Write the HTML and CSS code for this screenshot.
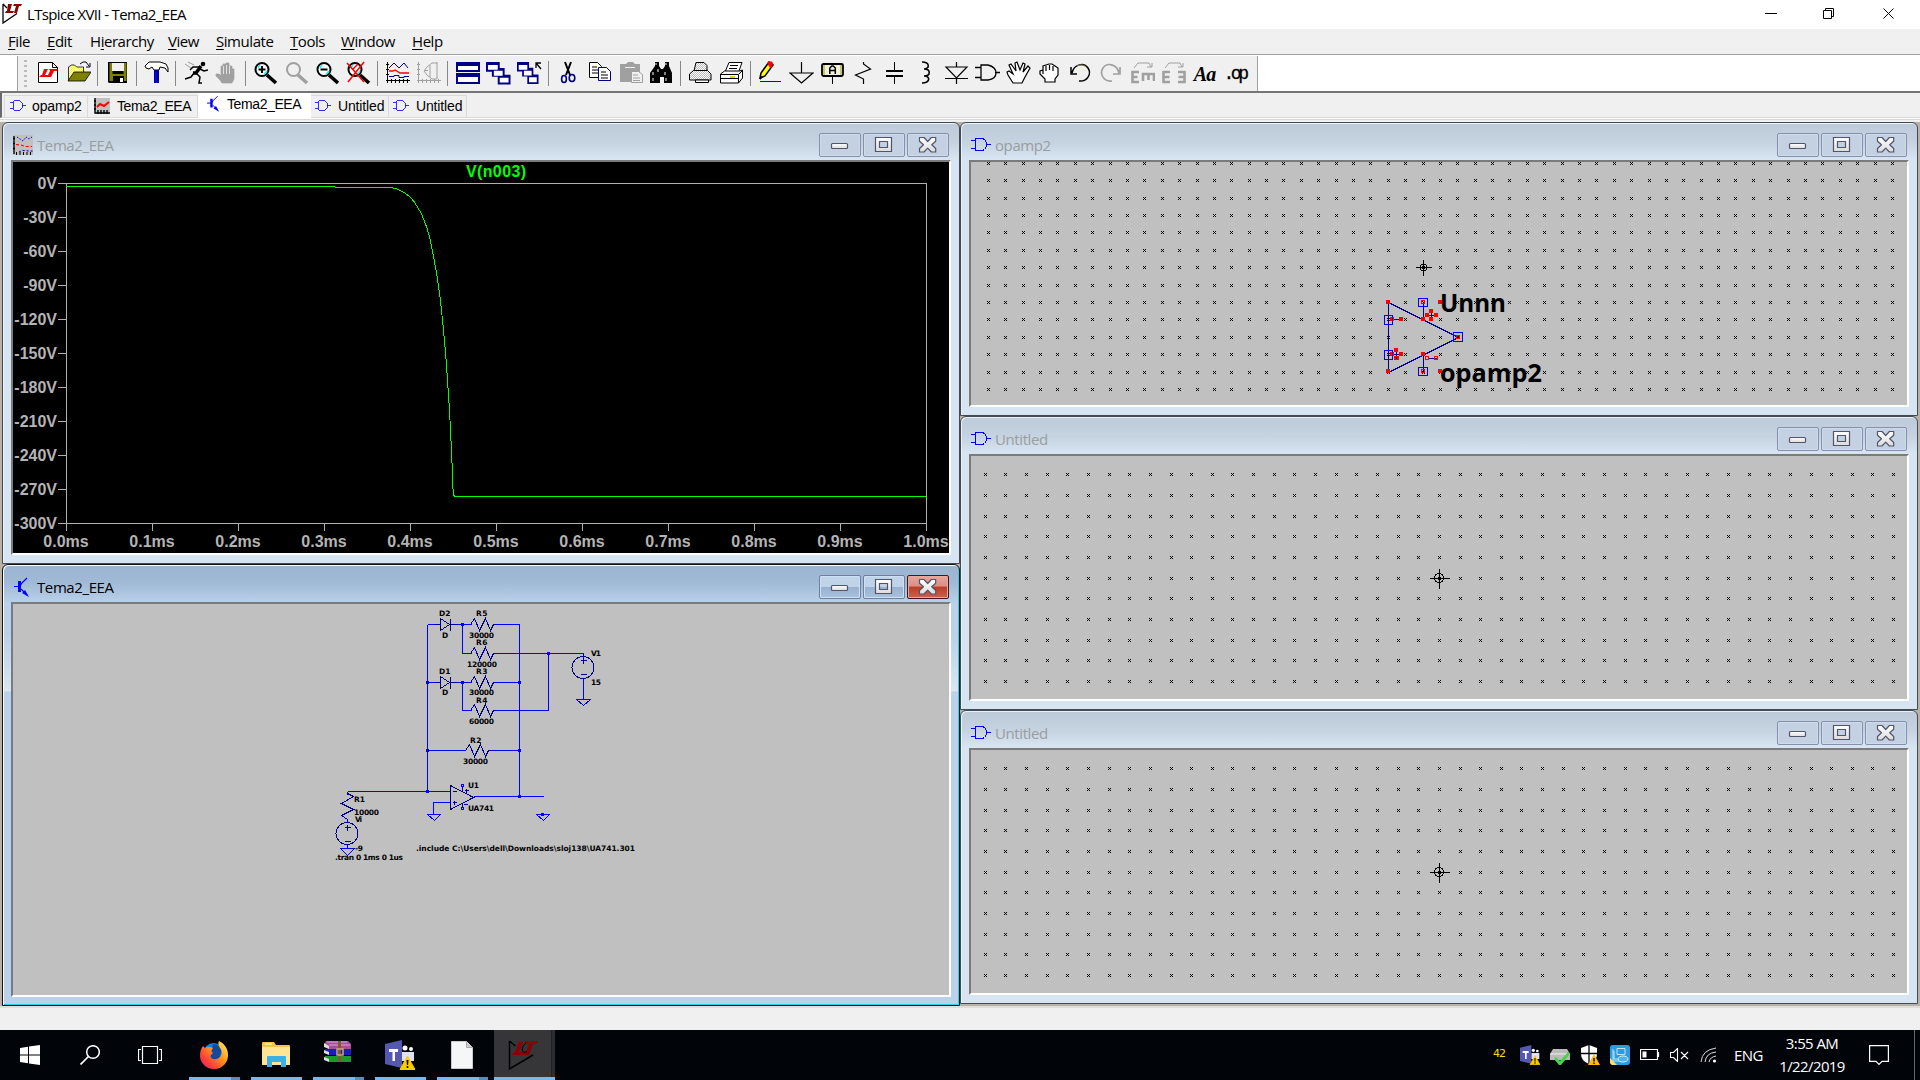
FILE: index.html
```html
<!DOCTYPE html>
<html lang="en">
<head>
<meta charset="utf-8">
<title>LTspice XVII - Tema2_EEA</title>
<link rel="stylesheet" href="styles.css">
</head>
<body>
<svg class="defs" width="0" height="0">
  <defs>
    <linearGradient id="metal" x1="0" y1="0" x2="0" y2="1"><stop offset="0" stop-color="#fff"/><stop offset="1" stop-color="#dcdcdc"/></linearGradient>
    <pattern id="dither" width="2" height="2" patternUnits="userSpaceOnUse"><rect width="2" height="2" fill="#fff"/><path d="M0 0h1v1H0zM1 1h1v1H1z" fill="#bbb"/></pattern>
    <pattern id="ydither" width="2" height="2" patternUnits="userSpaceOnUse"><rect width="2" height="2" fill="#ff0"/><path d="M0 0h1v1H0zM1 1h1v1H1z" fill="#fff"/></pattern>
    <symbol id="min" viewBox="0 0 40 22"><rect x="11.500" y="9.500" width="16" height="5" rx="1" fill="url(#metal)" stroke="#50556a" stroke-width="1.200"/></symbol>
    <symbol id="max" viewBox="0 0 40 22"><path d="M11.500 3.500h16v14h-16zM15.500 7.500v6h8v-6z" fill="url(#metal)" fill-rule="evenodd" stroke="#50556a" stroke-width="1.200"/></symbol>
    <symbol id="close" viewBox="0 0 40 22"><path d="M11.500 3.500h4.500l3.700 4 3.700-4h4.300v3.700l-4 3.600 4 3.700v3.500h-4.300l-3.700-3.800-3.700 3.800h-4.500v-3.500l4-3.700-4-3.600z" fill="url(#metal)" stroke="#50556a" stroke-width="1.200" stroke-linejoin="round"/></symbol>
    <symbol id="gate" viewBox="0 0 20 16"><path d="M0 3.500h4M0 11.500h4M4.500 1.500h7l2 1 2 3v4l-2 3-2 1h-7zM15.500 7.500H20" fill="none" stroke="#00e" shape-rendering="crispEdges"/></symbol>
    <symbol id="npn" viewBox="0 0 16 20"><path d="M0 9.500h5M6 9l2-3 5-5M7 12l6 6" fill="none" stroke="#00f" stroke-width="1.200"/><path d="M4 4h3v11H4zM8 16l3-3 4 7z" fill="#00f"/></symbol>
    <symbol id="wave" viewBox="0 0 20 20"><rect width="20" height="20" fill="#c0c0c0"/><path d="M1 1v18M0 3.500h2M0 8.500h2M0 13.500h2" stroke="#000" stroke-width="1.300" fill="none"/><path d="M3 18.500h17" stroke="#000" stroke-width="3" stroke-dasharray="1 2.500"/><path d="M4 2l6 4 3-4 3 2 3-2" stroke="#00f" fill="none" stroke-dasharray="1.500 1.500"/><path d="M3 9.500l5 .5 4 1.500h7" stroke="red" stroke-width="1.200" fill="none" stroke-dasharray="3 2"/><path d="M6 17l3-1.500h4l2 .5h5" stroke="#008" fill="none" stroke-dasharray="2 2"/></symbol>
    <symbol id="wavetab" viewBox="0 0 16 16"><rect x="1" width="15" height="16" fill="#c0c0c0"/><path d="M1 0v15h15M0 3h2M0 7h2M0 11h2M4 12v4M7 12v4M10 12v4M13 12v4" stroke="#000" stroke-width="1.400" fill="none"/><path d="M3 9l3-3 4 2 5-4" stroke="#f00" stroke-width="2" fill="none"/></symbol>
    <symbol id="teams" viewBox="0 0 30 30"><circle cx="20" cy="8" r="2.500" fill="#fff"/><circle cx="26" cy="9" r="2" fill="#fff"/><path d="M17 12h12v9h-12z" fill="#dfe0f5"/><path d="M0 4l17-4v28L0 24z" fill="#5558af"/><path d="M4 9h9v3H10v9H7.500v-9H4z" fill="#fff"/><path d="M22.500 16l7.500 13.500H15z" fill="#fc0" stroke="#fc0" stroke-linejoin="round"/><path d="M21.500 20h2l-.4 5h-1.200zM21.700 26h1.600v2h-1.600z" fill="#000"/></symbol>
    <symbol id="lt" viewBox="0 0 32 30"><path d="M1.500 1v28L25 15M1.500 1l6 5" fill="none" stroke="#000" stroke-width="1.500"/><path d="M11 2h4l-4 10h7l-1 3H4l2-3h1zM17 1h13l-2 3h-3l-4 11h-4l4-11h-5z" fill="#8b0000"/><path d="M18 3q-4 3-4 7 2 4 5 1" fill="none" stroke="#000"/></symbol>
    <g id="lens"><circle cx="8" cy="8.500" r="6.500" fill="#fff" stroke="#000" stroke-width="2"/><path d="M13 14l9 8" stroke="#000" stroke-width="3.600"/><path d="M4 6l2-2M11 12l2-2M5 5L4 7M10 13l2-1" stroke="#0ff" stroke-width="1.400"/></g>
    <g id="win3"><path d="M0 0h14v10H0zM6 6h13v9H6zM12 13h13v10H12z" fill="#000080"/><path d="M2 3h10v5H2zM8 9h9v5H8zM14 16h9v5h-9z" fill="#fff"/></g>
  </defs>
</svg>

<header class="titlebar">
  <svg class="app-icon" width="20" height="21" viewBox="0 0 20 21"><path d="M1 1v19L15 10.500M1 1l4 4" fill="none" stroke="#000" stroke-width="1.300"/><path d="M6 1h4L8 8h4l-1 2H3l1-2h1zM12 1h8l-1 2h-2l-2 7h-3l2-7h-3z" fill="#8b0000"/></svg>
  <span class="app-title">LTspice XVII - Tema2_EEA</span>
  <svg class="sysbtns" width="174" height="29" viewBox="0 0 174 29"><g fill="none" stroke="#000"><path d="M19 13.500h12M77.500 10.500h8v8h-8zM79.500 10.500v-2h8v8h-2M137.500 8.500l10 10M147.500 8.500l-10 10"/></g></svg>
</header>

<nav class="menubar">
  <span><u>F</u>ile</span><span><u>E</u>dit</span><span>H<u>i</u>erarchy</span><span><u>V</u>iew</span><span><u>S</u>imulate</span><span><u>T</u>ools</span><span><u>W</u>indow</span><span><u>H</u>elp</span>
</nav>

<div class="toolbar">
 <div class="tools">
  <i class="grip"></i>
  <svg viewBox="0 0 25 24"><path d="M3.500 1.500h14l5 5v15h-19zM17.500 1.500v5h5" fill="#fff" stroke="#000"/><path d="M9 8h4l-3 6h3l-1 2H4l2-2h1zM14 8h9l-1 2h-3l-3 6h-4l3-6z" fill="red"/></svg>
  <svg viewBox="0 0 25 24"><path d="M2.500 19V6l3-2h3l2 2h7v5" fill="url(#ydither)" stroke="#000" stroke-width=".8"/><path d="M2 20L8 11h17l-6 9z" fill="#808000" stroke="#000" stroke-width=".8"/><path d="M14 3l3-2h3l3 4M24 2v4h-4" fill="none" stroke="#000"/></svg>
  <i class="sep"></i>
  <svg viewBox="0 0 25 24"><path d="M3 1h19v21H4l-1-1z" fill="#000"/><path d="M4.500 2h3v11h11V2h3v18H4.500z" fill="#808000"/><path d="M7 2h12v8H7z" fill="#f0f0f0"/><path d="M8 15h11v7H8z"/><path d="M15 17h3v4h-3z" fill="#fff"/></svg>
  <i class="sep"></i>
  <svg viewBox="0 0 25 24"><path d="M1 5l4-4h11l6 2 2 4v4l-3-4-5-1-1 3h-5l-2-3-3 2-3-1z" fill="#fff" stroke="#000"/><path d="M10 9h5v13h-5z" fill="#000080"/><path d="M11 11h2v11h-2z" fill="#00f"/></svg>
  <i class="sep"></i>
  <svg viewBox="0 0 25 24"><circle cx="20" cy="3" r="2.300"/><path d="M18 5l-5 7-3 0" stroke="#000" stroke-width="3.400" fill="none"/><path d="M16 6h-6l-3 3M17 8l4 2 4-1M11 12l-3 4-6 2M13 12l4 4-1 6h3" stroke="#000" stroke-width="1.500" fill="none"/><path d="M2 3l6 4M5 1l6 3" stroke="#999" stroke-width="1" fill="none"/></svg>
  <svg viewBox="0 0 25 24"><path d="M8 22l-2-3-4-4v-2h3l2 2V5h2v7-9h3v9-10h3v10-7h3v8-5h2v10l-2 4z" fill="#a0a0a0" stroke="#a0a0a0" stroke-width=".7"/><path d="M9.500 5v8M12.500 4v9M15.500 5v8" stroke="#f0f0f0" stroke-width=".8"/></svg>
  <i class="sep"></i>
  <svg viewBox="0 0 25 24"><g transform="translate(1)"><use href="#lens"/><path d="M8 5v7M4.500 8.500h7" stroke="#000" stroke-width="2"/></g></svg>
  <svg viewBox="0 0 25 24"><circle cx="9.500" cy="8.500" r="6.500" fill="none" stroke="#a0a0a0" stroke-width="2"/><path d="M14 14l9 8" stroke="#a0a0a0" stroke-width="3.500"/></svg>
  <svg viewBox="0 0 25 24"><g transform="translate(1)"><use href="#lens"/><path d="M4.500 8.500h7" stroke="#000" stroke-width="2"/></g></svg>
  <svg viewBox="0 0 25 24"><g transform="translate(1)"><use href="#lens"/><path d="M0 2l17 19M17 1L1 21M6 8l5-5" stroke="red" stroke-width="1.500"/></g></svg>
  <i class="sep"></i>
  <svg viewBox="0 0 25 24"><path d="M2.500 1v21M1 19.500h24M6.500 18v4M10.500 18v4M14.500 18v4M18.500 18v4M22.500 18v4M1 3.500h3M1 8.500h3M1 13.500h3" stroke="#000" fill="none"/><path d="M4 7l5-5 5 5 5-5 4 5" stroke="#000080" fill="none"/><path d="M4 10h4l2-1 5 3h9" stroke="red" stroke-width="1.300" fill="none"/><path d="M4 15.500h5v-1h5v2h5v-1h5" stroke="#000080" fill="none"/></svg>
  <svg viewBox="0 0 25 24"><path d="M2.500 1v21M1 19.500h24M6.500 18v4M10.500 18v4M14.500 18v4M18.500 18v4M22.500 18v4M1 3.500h3M1 8.500h3M1 13.500h3M21 2h-5l-5 4-3 4 3 4 5 4h5M14 4v12M21 1v17M9 9.500h3" stroke="#a0a0a0" fill="none"/></svg>
  <i class="sep"></i>
  <svg viewBox="0 0 25 24"><path d="M1 1h24v10H1zM1 12h24v11H1z" fill="#000080"/><path d="M3 5h20v4H3zM3 16h20v5H3z" fill="#fff"/></svg>
  <svg viewBox="0 0 25 24"><use href="#win3" transform="translate(0,1) scale(.98)"/></svg>
  <svg viewBox="0 0 25 24"><use href="#win3" transform="translate(0,1) scale(.86,.96)"/><path d="M24 8l-5-6M19 7V2h5" stroke="#000" stroke-width="1.300" fill="none"/></svg>
  <i class="sep"></i>
  <svg viewBox="0 0 25 24"><path d="M9 1l5 13M15 1l-5 13" stroke="#000" stroke-width="2"/><g fill="none" stroke="#000080" stroke-width="1.600"><ellipse cx="8" cy="18" rx="2.400" ry="3.500"/><ellipse cx="16" cy="17" rx="2.800" ry="3.500"/></g></svg>
  <svg viewBox="0 0 25 24"><path d="M2.500 1.500h8l4 4v11h-12z" fill="#fff" stroke="#000"/><path d="M5 6h5M5 9h6M5 12h6" stroke="#000"/><path d="M11.500 6.500h8l4 4v9h-12z" fill="#fff" stroke="#000080"/><path d="M14 11h5M14 14h7M14 17h7" stroke="#000"/></svg>
  <svg viewBox="0 0 25 24"><path d="M2 3h6l2-2h5l2 2h5v18H2z" fill="#a0a0a0"/><path d="M13.500 10.500h7l4 3v8h-11z" fill="#f0f0f0" stroke="#a0a0a0"/><path d="M6 5h12M15 14h5M15 17h7M15 19.500h7" stroke="#a0a0a0"/><path d="M7 6.500h10" stroke="#f0f0f0"/></svg>
  <svg viewBox="0 0 25 24"><path d="M6 1h4v4l2 3h2l2-3V1h4v4l3 7v10h-8v-6h-4v6H1V12l5-7z"/><path d="M7 2v2M17 2v2M4 11v3M16 11v3M4 17v3M17 17v3M9 8v3" stroke="#fff"/></svg>
  <i class="sep"></i>
  <svg viewBox="0 0 25 24"><path d="M6 10l2-8.500h8l3 3V10" fill="url(#dither)" stroke="#000"/><path d="M1.500 19v-6l4-3.500h14l3.500 3.500v6z" fill="url(#dither)" stroke="#000"/><path d="M7.500 19h13v2.500h-13z" fill="#fff" stroke="#000"/></svg>
  <svg viewBox="0 0 25 24"><path d="M6 11l4-9.500h13L20 10" fill="#fff" stroke="#000"/><path d="M11 4.500h8M10 7.500h8" stroke="#000"/><path d="M1.500 13l4-3h15l3-1v8l-4 5h-18zM1.500 13.500h18l4-4M19.500 14v8M1.500 17.500h18" fill="#fff" stroke="#000"/><path d="M11 16h5" stroke="#dd0" stroke-width="2"/></svg>
  <i class="sep"></i>
  <svg viewBox="0 0 25 24"><path d="M2 17l1-5 8-11 4 3-8 11z" fill="#ff0" stroke="#000" stroke-width="1.500"/><path d="M9 2l2-1.500h3l1 2-1 4-2 .5z" fill="red"/><path d="M2 15l3 1-3 3z"/><path d="M2 20.500h21" stroke="#00f"/></svg>
  <svg viewBox="0 0 25 24"><path d="M12.500 1v11M1 12h23L12.500 22z" fill="none" stroke="#000" stroke-width="1.200"/></svg>
  <svg viewBox="0 0 25 24"><rect x="2" y="3" width="21" height="12" rx="1.500" fill="#f0f0dc" stroke="#000" stroke-width="1.800"/><path d="M4 4v10M21 4v10" stroke="#990"/><path d="M12.500 16v7" stroke="#000"/><path d="M9.800 13V7l2-2h1.500l2 2v6M10 9.500h5" stroke="#000" stroke-width="1.500" fill="none"/></svg>
  <svg viewBox="0 0 25 24"><path d="M12.500 1v2l7 5-15 6 8 4v5" fill="none" stroke="#000" stroke-width="1.200"/></svg>
  <svg viewBox="0 0 25 24"><path d="M12.500 1v9M12.500 15v8" stroke="#000"/><path d="M4 10h17M4 15h17" stroke="#000" stroke-width="2"/></svg>
  <svg viewBox="0 0 25 24"><path d="M9 1c8 0 8 7 2 7 7 0 7 7 0 7 7 0 6 7-2 7" fill="none" stroke="#000" stroke-width="1.600"/></svg>
  <svg viewBox="0 0 25 24"><path d="M12.500 1v5M12.500 17v6M2 6h21L12.500 17zM1 17.500h23" fill="none" stroke="#000" stroke-width="1.200"/></svg>
  <svg viewBox="0 0 25 24"><path d="M0 6.500h6M0 16.500h6M6 4h7q8 2 8 8t-8 7H6zM20 11.500h5" fill="none" stroke="#000" stroke-width="1.300"/></svg>
  <svg viewBox="0 0 25 24"><path d="M7 22l-5-8-1-3 2-1 4 3L3 4l2-1 5 7L9 2l2-1 3 8 3-7 2 1-2 8 5-6 2 2-5 9-3 6z" fill="#fff" stroke="#000" stroke-width="1.200"/></svg>
  <svg viewBox="0 0 25 24"><path d="M8 21v-3l-5-5V10l3-1V5l3-1 3-1 3 0 3 2 3 2v7l-3 4v3zM9 5v5M12.500 4v5M16 5v5M6 9v4" fill="#fff" stroke="#000" stroke-width="1.200"/></svg>
  <svg viewBox="0 0 25 24"><path d="M4 12C6 3 16 1 20 7s-1 14-9 13M3 6v7h6" fill="none" stroke="#000" stroke-width="1.500"/><path d="M9 5q6-3 10 2" fill="none" stroke="#880"/></svg>
  <svg viewBox="0 0 25 24"><path d="M20 12C18 3 8 1 4 7s1 14 9 13M21 6v7h-7" fill="none" stroke="#a0a0a0" stroke-width="1.700"/></svg>
  <svg viewBox="0 0 25 24"><path d="M9 11H2.500v10H9M2.500 16h5M13 20v-7h11v7M18.500 13v6" stroke="#a0a0a0" stroke-width="2.600" fill="none"/><path d="M4 7l4-5h11l2 4M17 6h5V2" stroke="#a0a0a0" fill="none"/></svg>
  <svg viewBox="0 0 25 24"><path d="M9 11H2.500v10H9M2.500 16h6M17 11h6.500v10H17M23.500 16h-6" stroke="#a0a0a0" stroke-width="2.600" fill="none"/><path d="M4 7l4-5h11l2 4M17 6h5V2" stroke="#a0a0a0" fill="none"/></svg>
  <span class="txt-aa">Aa</span>
  <span class="txt-op">.op</span>
 </div>
</div>

<div class="tabs">
  <span class="tab t1"><svg width="16" height="14"><use href="#gate"/></svg>opamp2</span>
  <span class="tab t2"><svg width="16" height="16"><use href="#wavetab"/></svg>Tema2_EEA</span>
  <span class="tab t3"><svg width="13" height="17"><use href="#npn"/></svg>Tema2_EEA</span>
  <span class="tab t4"><svg width="16" height="14"><use href="#gate"/></svg>Untitled</span>
  <span class="tab t4"><svg width="16" height="14"><use href="#gate"/></svg>Untitled</span>
</div>

<main class="mdi">
 <div class="col">
  <section class="win plot">
    <div class="cap"><svg width="20" height="20"><use href="#wave"/></svg><b>Tema2_EEA</b><svg class="wb"><use href="#min"/></svg><svg class="wb"><use href="#max"/></svg><svg class="wb"><use href="#close"/></svg></div>
    <div class="client black"><svg id="plot" width="936" height="391" viewBox="13 162 936 391">
      <path class="axis" d="M66.500 183.500h860v340h-860z"/>
      <g id="ticks"></g>
      <path class="trace" d="M66 186.500H335M335 187.500H391L396.600 188.700 405 193 410 197 414.400 202 418 208 421 213 424 220 427.300 229 430.500 241 433.300 255 437 276 440.300 299 443 325 445.500 352 447.500 380 449.500 410 451.800 457 452.900 488 453.600 495 455 496.500H926"/>
      <text x="466" y="177" class="tname" textLength="60">V(n003)</text>
    </svg></div>
  </section>
  <section class="win active">
    <div class="cap"><svg width="16" height="20"><use href="#npn"/></svg><b>Tema2_EEA</b><svg class="wb"><use href="#min"/></svg><svg class="wb"><use href="#max"/></svg><svg class="wb red"><use href="#close"/></svg></div>
    <div class="client"><svg width="936" height="391" viewBox="13 604 936 391">
      <g class="wire" transform="translate(.5 .5)">
        <path d="M427 624V791M519 624V796M427 624h13M450 624h21M494 624h25M462 624v29h9M494 653h89v3M427 682h13M450 682h21M494 682h25M462 682v28h9M494 710h54V653M427 750h38M489 750h30M347 791h103M347 791v3M473 796h70M433 814v-12h17M583 678v21M347 844v4"/>
        <path d="M576 699h14l-7 6zM427 814h13l-6 6zM536 814h13l-6 6zM340 848h14l-7 7z"/>
        <path d="M461 784h2v2h-2zM461 807h2v2h-2z"/>
      </g>
      <g class="part" transform="translate(.5 .5)">
        <path id="res" d="M470 624l4-6 5 12 6-12 5 12 3-6h2"/>
        <use href="#res" y="29"/><use href="#res" y="58"/><use href="#res" y="86"/><use href="#res" x="-5" y="126"/>
        <path id="dio" d="M440 618v12l9-6zM450 618v12M434 624h6M450 624h6"/><use href="#dio" y="58"/>
        <path d="M347 793l6 3-12 7 12 6-12 6 6 4v3M450 785v24l23-12zM452 791h4M452 802h4M454 800v4M462 786v5M464 790h4M466 788v4M462 806v-4M463 804h4"/>
        <circle cx="582.500" cy="667" r="11"/><circle cx="346.500" cy="833" r="11"/>
        <path d="M583 653v5M580 660h6M583 657v6M580 674h6M344 827h6M347 824v6M344 841h6"/>
      </g>
      <path class="node" d="M461 623h3v3h-3zM461 681h3v3h-3zM426 681h3v3h-3zM426 749h3v3h-3zM426 790h3v3h-3zM518 681h3v3h-3zM518 749h3v3h-3zM518 795h3v3h-3zM547 652h3v3h-3zM541 813h3v3h-3z"/>
      <g class="lbl">
        <text x="439" y="616" textLength="11.500">D2</text><text x="476" y="616" textLength="11.500">R5</text><text x="442" y="638">D</text><text x="469" y="638" textLength="25">30000</text>
        <text x="476" y="645" textLength="11.500">R6</text><text x="467" y="667" textLength="30">120000</text><text x="439" y="674" textLength="11.500">D1</text><text x="476" y="674" textLength="11.500">R3</text>
        <text x="442" y="695">D</text><text x="469" y="695" textLength="25">30000</text><text x="476" y="703" textLength="11.500">R4</text><text x="469" y="724" textLength="25">60000</text>
        <text x="470" y="743" textLength="11.500">R2</text><text x="463" y="764" textLength="25">30000</text><text x="591" y="656" textLength="10">V1</text><text x="591" y="685" textLength="10">15</text>
        <text x="468" y="788" textLength="11">U1</text><text x="468" y="811" textLength="26">UA741</text><text x="354" y="802" textLength="11">R1</text><text x="354" y="815" textLength="25">10000</text>
        <text x="355" y="822" textLength="7">Vi</text><text x="355" y="851" textLength="8">-9</text><text x="335" y="860" textLength="68">.tran 0 1ms 0 1us</text>
        <text x="416" y="851" textLength="219">.include C:\Users\dell\Downloads\sloj138\UA741.301</text>
      </g>
    </svg></div>
  </section>
 </div>
 <div class="col">
  <section class="win">
    <div class="cap"><svg width="20" height="16"><use href="#gate"/></svg><b>opamp2</b><svg class="wb"><use href="#min"/></svg><svg class="wb"><use href="#max"/></svg><svg class="wb"><use href="#close"/></svg></div>
    <div class="client"><svg width="936" height="243" viewBox="971 162 936 243">
      <path class="grid" data-x="987.900" data-y="162.900" data-step="17.385" data-cols="53" data-rows="14"/>
      <g class="origin" transform="translate(.5 .5)"><path d="M1415 267h16M1423 259v16"/><circle cx="1423" cy="267" r="3.200"/></g>
      <g class="part" transform="translate(.5 .5)"><path d="M1388 302v70l70-35zM1423 302v17M1423 354v18M1392 319h9M1391 354h10M1396 350v8M1427 315h9M1431 311v8M1427 358h9"/></g>
      <path class="handle" d="M1386 300h4v4h-4zM1386 369h4v4h-4zM1421 317h4v4h-4zM1421 352h4v4h-4zM1438 300h4v4h-4zM1438 369h4v4h-4zM1390 317h4v4h-4zM1399 317h4v4h-4zM1390 352h4v4h-4zM1399 352h4v4h-4zM1394 348h4v4h-4zM1425 313h4v4h-4zM1434 313h4v4h-4zM1429 309h4v4h-4zM1429 317h4v4h-4z"/>
      <path class="hollow" d="M1421.500 300.500h3v3h-3zM1421.500 369.500h3v3h-3zM1456.500 335.500h3v3h-3zM1395 356.500h3v3h-3zM1425.500 356.500h3v3h-3zM1434.500 356.500h3v3h-3z"/>
      <path class="pin" d="M1384.500 315.500h8v9h-8zM1384.500 350.500h8v9h-8zM1418.500 298.500h9v8h-9zM1418.500 367.500h9v8h-9zM1453.500 332.500h9v9h-9z"/>
      <g class="big"><text x="1440" y="312" textLength="66" lengthAdjust="spacingAndGlyphs">Unnn</text><text x="1440" y="382" textLength="102" lengthAdjust="spacingAndGlyphs">opamp2</text></g>
    </svg></div>
  </section>
  <section class="win">
    <div class="cap"><svg width="20" height="16"><use href="#gate"/></svg><b>Untitled</b><svg class="wb"><use href="#min"/></svg><svg class="wb"><use href="#max"/></svg><svg class="wb"><use href="#close"/></svg></div>
    <div class="client"><svg width="936" height="243" viewBox="971 456 936 243">
      <path class="grid" data-x="984.700" data-y="474.350" data-step="20.645" data-cols="45" data-rows="11"/>
      <g class="origin" transform="translate(.5 .5)"><path d="M1429 578h20M1439 568v20"/><circle cx="1438.500" cy="577.500" r="4.500"/></g>
    </svg></div>
  </section>
  <section class="win">
    <div class="cap"><svg width="20" height="16"><use href="#gate"/></svg><b>Untitled</b><svg class="wb"><use href="#min"/></svg><svg class="wb"><use href="#max"/></svg><svg class="wb"><use href="#close"/></svg></div>
    <div class="client"><svg width="936" height="243" viewBox="971 456 936 243">
      <path class="grid" data-x="984.700" data-y="474.350" data-step="20.645" data-cols="45" data-rows="11"/>
      <g class="origin" transform="translate(.5 .5)"><path d="M1429 578h20M1439 568v20"/><circle cx="1438.500" cy="577.500" r="4.500"/></g>
    </svg></div>
  </section>
 </div>
</main>

<div class="status"></div>

<footer class="taskbar">
  <span class="sys"><svg width="20" height="20" viewBox="0 0 20 20"><path d="M0 3l8-1.200V9.500H0zM9 1.600L20 0v9.500H9zM0 10.500h8v7.700L0 17zM9 10.500h11V20L9 18.400z" fill="#fff"/></svg></span>
  <span class="sys"><svg width="20" height="20" viewBox="0 0 20 20"><circle cx="13" cy="7" r="6.300" fill="none" stroke="#fff" stroke-width="1.500"/><path d="M8.500 11.500L.5 19.500" stroke="#fff" stroke-width="1.700"/></svg></span>
  <span class="sys"><svg width="24" height="20" viewBox="0 0 24 20"><path d="M4.500 1.500h15v17h-15zM3 4.500H.5v11H3M21 4.500h2.500v11H21" fill="none" stroke="#fff" stroke-width="1.200"/></svg></span>
  <span class="app first two"><svg width="28" height="28" viewBox="0 0 28 28"><defs><linearGradient id="fx" x1="1" y1="0" x2="0" y2="1"><stop offset="0" stop-color="#fff36b"/><stop offset=".4" stop-color="#ff9a1a"/><stop offset=".75" stop-color="#ff3a3a"/><stop offset="1" stop-color="#e3148a"/></linearGradient></defs><circle cx="13.500" cy="12" r="10" fill="#0a84e0"/><path d="M13 3q7 0 9 6l-3 9-9 2z" fill="#12499c"/><path d="M3 5l2 2q2-2 5-1l3 1-2 3 2 2-3 3q2 4 6 3c6-1 7-7 4-11-2-3-2-5-1-7 6 3 9 8 9 14A14 13.500 0 0 1 0 15Q0 9 3 5z" fill="url(#fx)"/></svg></span>
  <span class="app"><svg width="28" height="26" viewBox="0 0 28 26"><path d="M0 3V1q0-1 1-1h11l2 3h13q1 0 1 1v19H0z" fill="#f8c546"/><path d="M0 5h28v17q0 1-1 1H1q-1 0-1-1z" fill="#ffe694"/><path d="M3 2h7" stroke="#fff"/><path d="M5 25V15q0-1 1-1h17q1 0 1 1v10h-5v-5h-9v5z" fill="#3ab0e8"/></svg></span>
  <span class="app two rar"><svg width="28" height="24" viewBox="0 0 28 24"><path d="M2 0h22l3 3v5H5L0 4z" fill="#a5509a"/><path d="M3 1h20M5 4h21" stroke="#d9a3d3"/><path d="M1 8h26v6H5L0 12z" fill="#1b1bb8"/><path d="M1 15h26v6H5L0 18z" fill="#1c9a28"/><path d="M0 2l5 3v3L0 6zM0 9l5 2v3L0 12zM0 16l5 2v3L0 19z" fill="#ddd"/><path d="M14 0h3v21h-3z" fill="#80592c"/><path d="M13 8h6v6h-6z" fill="none" stroke="#c7a878" stroke-width="1.500"/></svg></span>
  <span class="app"><svg width="30" height="30"><use href="#teams"/></svg></span>
  <span class="app two"><svg width="22" height="28" viewBox="0 0 22 28"><path d="M.5.500h15l6 6v21H.5z" fill="#f5f6f7" stroke="#ccc"/><path d="M15.500.500v6h6" fill="#ccc" stroke="#aaa"/></svg></span>
  <span class="app on"><svg width="32" height="30"><use href="#lt"/></svg></span>
  <span class="tray">
    <em>42</em>
    <svg width="20" height="20"><use href="#teams"/></svg>
    <svg width="20" height="20" viewBox="0 0 20 20"><path d="M3 4h14l3 5v6H0V9z" fill="#bbb"/><path d="M0 9h20" stroke="#eee"/><path d="M6 12l4 4 8-9 2 2-9 11h-2l-5-6z" fill="#4ad04a"/></svg>
    <svg width="20" height="20" viewBox="0 0 20 20"><path d="M9 0l8 3v6q0 7-8 10-8-3-8-10V3z" fill="#fff"/><path d="M9 0v19M0 8.500h18" stroke="#000508" stroke-width="1.300"/><path d="M14 9l6 11H8z" fill="#fdb813"/><path d="M14 13v3.500M14 17.500v1.500" stroke="#000" stroke-width="1.300"/></svg>
    <svg width="20" height="20" viewBox="0 0 20 20"><rect width="20" height="20" rx="3" fill="#2a9de0"/><path d="M0 13l7 7H2l-2-2z" fill="#fd6"/><path d="M7 3.500h8v6H7zM4 6v8h8M3 4v12h8" fill="none" stroke="#bfe6ff"/><ellipse cx="13" cy="14" rx="5" ry="3" fill="#4bb2ea" stroke="#d7f0ff"/></svg>
    <svg width="20" height="12" viewBox="0 0 20 12"><path d="M.5.500h17v10H.5zM18.500 3v5" fill="none" stroke="#fff" stroke-width="1.200"/><path d="M2.500 2.500h4v6h-4z" fill="#fff"/></svg>
    <svg width="20" height="14" viewBox="0 0 20 14"><path d="M.5 4.500h3l4-4v13l-4-4h-3zM11 4l7 7M18 4l-7 7" fill="none" stroke="#fff" stroke-width="1.100"/></svg>
    <svg width="18" height="16" viewBox="0 0 18 16"><g fill="none" stroke="#ddd"><path d="M1 15Q2 3 16 1" /><path d="M5 15Q6 6 16 5"/><path d="M9 15Q10 10 16 9"/></g><circle cx="14.500" cy="14" r="1.600" fill="#fff"/></svg>
    <span class="eng">ENG</span>
    <span class="clock"><span>3:55 AM</span><span>1/22/2019</span></span>
    <svg width="20" height="20" viewBox="0 0 20 20"><path d="M.600.600h18.800v15.800H13l-3 3-3-3H.600z" fill="none" stroke="#fff" stroke-width="1.200"/></svg>
    <i class="peek"></i>
  </span>
</footer>
<script src="draw.js"></script>
</body>
</html>
```
FILE: styles.css
```css
* { box-sizing: border-box; }
body { margin: 0; width: 1920px; height: 1080px; overflow: hidden; background: #f0f0f0; font: 15px/20px "Open Sans", "Noto Sans", sans-serif; color: #000; display: flex; flex-direction: column; }
svg { display: block; flex: none; }
.defs { position: absolute; }

.titlebar { height: 29px; flex: none; background: #fff; display: flex; align-items: center; padding-left: 2px; }
.app-icon { margin-top: -3px; }
.app-title { margin: -2px 0 0 5px; letter-spacing: -.65px; flex: 1; }
.sysbtns { flex: none; }

.menubar { height: 26px; flex: none; display: grid; grid-template-columns: 39px 43px 78px 48px 74px 51px 71px 60px; padding: 2px 0 0 8px; border-bottom: 1px solid #a0a0a0; letter-spacing: -.45px; }
.menubar u { text-underline-offset: 2px; }

.toolbar { height: 38px; flex: none; background: #fff; border-bottom: 2px solid #757575; border-top: 1px solid #fff; padding-left: 17px; }
.tools { width: 1241px; height: 35px; background: #f0f0f0; border: solid #a0a0a0; border-width: 0 1px; display: flex; align-items: center; }
.tools > svg { width: 25px; height: 24px; margin: -1px 3px 0; }
.grip { width: 3px; height: 28px; margin: 0 5px 0 6px; background: repeating-linear-gradient(#bbb 0 2px, transparent 2px 5px); }
.sep { width: 1px; height: 25px; margin: -1px 4px 0 3px; background: #888; }
.txt-aa, .txt-op { width: 31px; text-align: center; font: italic bold 20px/24px "Liberation Serif", serif; letter-spacing: -1px; }
.txt-op { width: 29px; font: 18px/20px "Liberation Mono", monospace; letter-spacing: -3.5px; -webkit-text-stroke: .3px #000; }

.tabs { height: 25px; flex: none; display: flex; align-items: flex-end; border-bottom: 1px solid #d9d9d9; border-left: 2px solid #696969; padding-left: 2px; font: 14px/16px "Liberation Sans", Arial, sans-serif; letter-spacing: -.15px; }
.tab { height: 22px; display: flex; align-items: center; border: 1px solid #d9d9d9; border-width: 1px 1px 0 0; white-space: nowrap; padding-bottom: 1px; }
.t1 { width: 84px; padding-left: 5px; gap: 6px; border-left-width: 1px; }
.t2 { width: 110px; padding-left: 6px; gap: 7px; letter-spacing: -.4px; }
.t3 { width: 113px; height: 25px; padding: 0 0 4px 9px; gap: 7px; background: #fff; border: 0; margin-bottom: -1px; letter-spacing: -.4px; }
.t4 { width: 78px; padding-left: 4px; gap: 7px; }

.mdi { height: 888px; flex: none; display: flex; padding: 4px 2px 0 2px; background: linear-gradient(#fff 0 1px, #d9d9d9 1px 2px, #f0f0f0 2px 4px, #b8b2a6 4px); }
.col { width: 958px; display: flex; flex-direction: column; }
.win { height: 294px; border: 1px solid #444b52; border-radius: 6px 6px 0 0; padding: 0 8px 8px; display: flex; flex-direction: column; background: linear-gradient(#bccad9, #c6d3e1 20px, #d7e4f2 36px); box-shadow: inset 1px 1px #e8f0f8; }
.plot { height: 442px; }
.active { height: 442px; border-color: #111; background: linear-gradient(#99b4d1, #a1bad6 18px, #b9d1ea 38px, #b9d1ea 70px, #d9e6f3 126px, #b9d1ea 127px); box-shadow: inset 1px 1px #fff, inset -1px -1px #2fd0e2; }
.cap { height: 37px; flex: none; display: flex; align-items: center; padding: 7px 2px 0 2px; gap: 4px; }
.cap b { flex: 1; font-weight: normal; color: #9a9da0; letter-spacing: -.4px; margin-top: -1px; }
.active .cap b { color: #000; }
.active .cap > svg:first-child { margin: 0 3px 0 1px; }
.cap .wb { width: 42px; height: 24px; border: 1px solid #8490ad; border-radius: 2px; margin-left: -2px; background: #c3d1e2; box-shadow: inset 0 0 0 1px #cfdbea; }
.cap b + .wb { margin-left: 0; }
.active .wb { background: linear-gradient(#bfd3e9 48%, #98b2d0 52%, #a9c2de); border-color: #6f7f9d; box-shadow: inset 0 0 0 1px #cfe0f2; }
.active .wb.red { background: linear-gradient(#e6a59b, #dd8f84 46%, #b93e26 50%, #c8644f); border-color: #43141a; box-shadow: inset 0 0 0 1px #e8a89c; }
.client { flex: 1; border: 2px solid; border-color: #7b7b7b #fff #fff #7b7b7b; background: #c0c0c0; overflow: hidden; }
.black { background: #000; }

.axis { fill: none; stroke: #b0b0b0; shape-rendering: crispEdges; }
.axlbl { fill: #b4b4b4; font: bold 16px "Liberation Sans", Arial, sans-serif; }
.end { text-anchor: end; }
.mid { text-anchor: middle; }
.tname { fill: #0f0; font: bold 16px "Liberation Sans", Arial, sans-serif; }
.trace { fill: none; stroke: #0f0; stroke-width: 1; shape-rendering: crispEdges; }
.wire, .pin { fill: none; stroke: #00f; shape-rendering: crispEdges; }
.part { fill: none; stroke: #00008b; shape-rendering: crispEdges; }
.node { fill: #00f; }
.lbl { font: bold 7.5px "DejaVu Sans", sans-serif; }
.big { font: bold 25px "Open Sans", sans-serif; }
.handle { fill: #f00; }
.hollow { fill: none; stroke: #f00; shape-rendering: crispEdges; stroke-width: 1.5; }
.origin { fill: none; stroke: #000; shape-rendering: crispEdges; }
.grid { fill: #000; shape-rendering: crispEdges; }

.status { height: 24px; flex: none; border-top: 2px solid #dedede; background: #f0f0f0; }

.taskbar { height: 50px; flex: none; background: #010409; display: flex; color: #fff; }
.sys { width: 60px; display: flex; align-items: center; justify-content: center; }
.app { width: 51px; margin: 0 5px 0 6px; display: flex; align-items: center; justify-content: center; border-bottom: 3px solid #76b9ed; padding: 3px 1px 0 0; }
.first { margin-left: 9px; }
.rar { padding: 0 1px 2px 0; }
.two { border-image: linear-gradient(90deg, #76b9ed 40px, #5b8db5 40px) 3; border-style: solid; border-width: 0 0 3px; }
.on { width: 61px; margin-left: 1px; background: linear-gradient(90deg, #363639 57px, #222 57px 58px, #2d2d30 58px); }
.tray { flex: 1; display: flex; align-items: center; justify-content: flex-end; gap: 10px; }
.tray em { font: 11px/12px "DejaVu Sans", sans-serif; color: #fd0; letter-spacing: -1px; margin: -2px 5px 0 0; }
.eng { letter-spacing: -.6px; margin: 0 0 0 6px; width: 28px; }
.clock { width: 70px; margin: 0 12px 0 5px; display: flex; flex-direction: column; text-align: center; line-height: 23px; letter-spacing: -.6px; white-space: nowrap; }
.peek { width: 6px; height: 50px; border-left: 1px solid #666; margin-left: 15px; }
```
FILE: draw.js
```js
const NS = 'http://www.w3.org/2000/svg';

// Editor grids: one small x-shaped mark per grid point.
document.querySelectorAll('.grid').forEach(p => {
  const { x, y, step, cols, rows } = p.dataset;
  let d = '';
  for (let r = 0; r < +rows; r++) for (let c = 0; c < +cols; c++) {
    const px = Math.round(+x + c * step) - 1, py = Math.round(+y + r * step) - 1;
    d += `M${px} ${py}h1v1h-1zM${px + 2} ${py}h1v1h-1zM${px + 1} ${py + 1}h1v1h-1zM${px} ${py + 2}h1v1h-1zM${px + 2} ${py + 2}h1v1h-1z`;
  }
  p.setAttribute('d', d);
});

// Plot axes: 0V..-300V down the side, 0.0ms..1.0ms along the bottom.
const ticks = document.getElementById('ticks');
const add = (tag, attrs, text) => {
  const el = document.createElementNS(NS, tag);
  for (const k in attrs) el.setAttribute(k, attrs[k]);
  if (text) el.textContent = text;
  ticks.append(el);
};
for (let i = 0; i <= 10; i++) {
  const y = 183.5 + i * 34, x = 66.5 + i * 86;
  add('path', { class: 'axis', d: `M58 ${y}h8M${x} 523v8` });
  add('text', { class: 'axlbl end', x: 57, y: y + 5.5 }, (i ? -30 * i : 0) + 'V');
  add('text', { class: 'axlbl mid', x: x - .5, y: 547 }, (i / 10).toFixed(1) + 'ms');
}
```
